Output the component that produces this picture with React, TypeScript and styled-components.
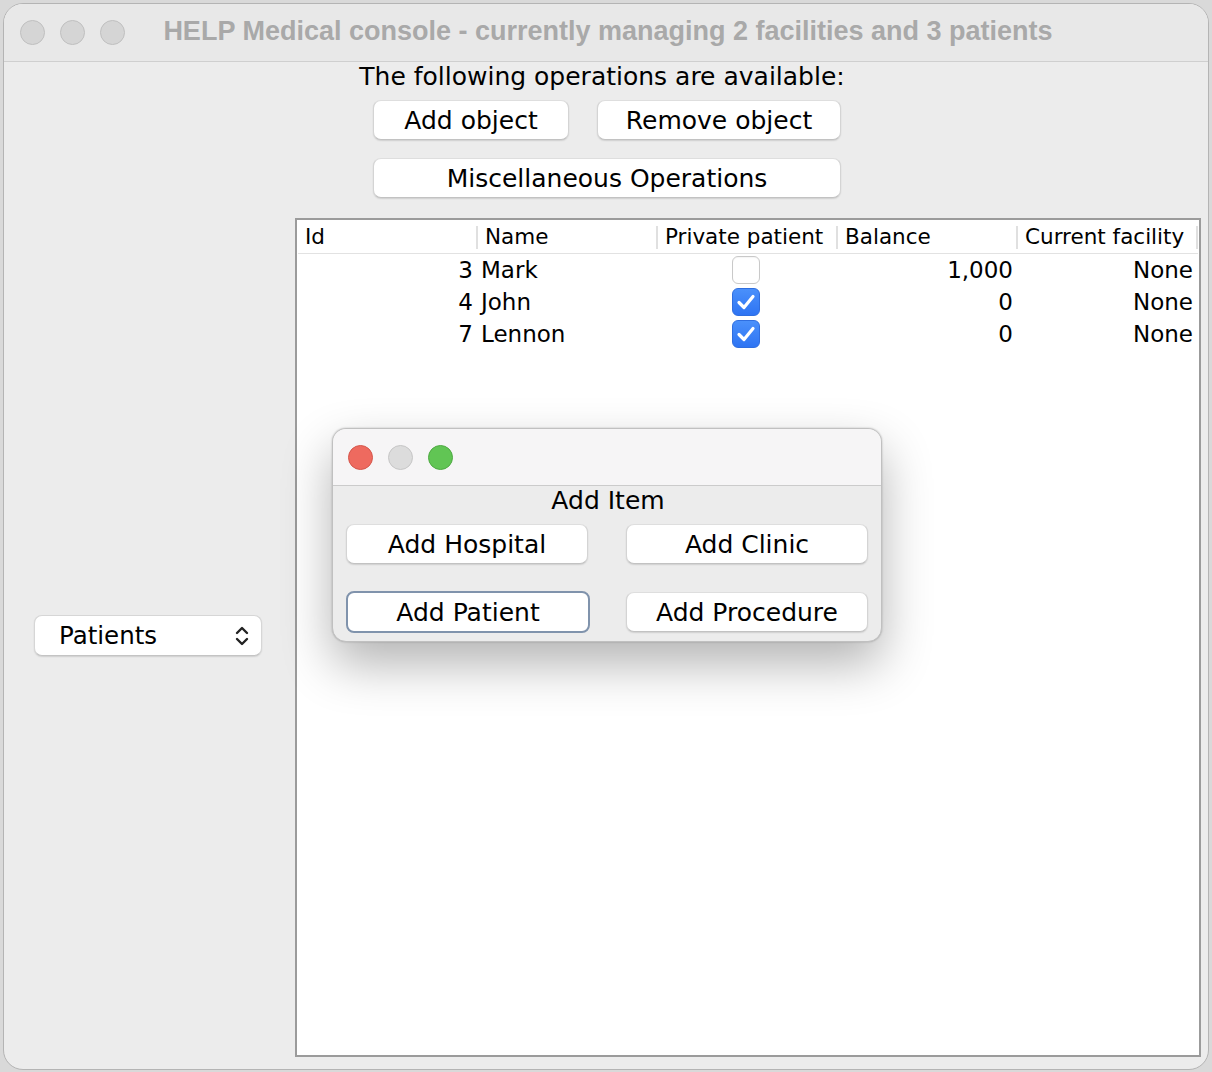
import React from "react";
import styled, { createGlobalStyle, css } from "styled-components";

const Global = createGlobalStyle`
  html, body { margin: 0; padding: 0; background: #d9d9d9; }
  body { width: 1212px; height: 1072px; overflow: hidden; }
  * { box-sizing: border-box; }
`;

const FONT = `"DejaVu Sans", "Noto Sans", sans-serif`;

const Window = styled.div`
  position: relative;
  margin: 3px 0 0 3px;
  width: 1206px;
  height: 1067px;
  border-radius: 20px;
  border: 1px solid #b4b4b4;
  background: #ececec;
  overflow: hidden;
  display: flex;
  flex-direction: column;
  font-family: ${FONT};
  color: #000;
`;

const TitleBar = styled.div`
  height: 58px;
  flex: none;
  display: flex;
  align-items: center;
  padding-left: 16px;
  border-bottom: 1px solid #cfcfcf;
  background: #e8e8e8;
  position: relative;
`;

const Lights = styled.div`
  display: flex;
  gap: 15px;
  align-items: center;
`;

const Light = styled.span<{ $c: string; $b: string }>`
  width: 25px;
  height: 25px;
  border-radius: 50%;
  background: ${(p) => p.$c};
  border: 1px solid ${(p) => p.$b};
  display: block;
`;

const Title = styled.div`
  position: absolute;
  left: 0;
  right: 0;
  top: 0;
  bottom: 0;
  display: flex;
  align-items: center;
  justify-content: center;
  font-family: "Liberation Sans", Arial, sans-serif;
  font-weight: 700;
  font-size: 27px;
  color: #a9a9a9;
  pointer-events: none;
  padding: 0 0 2px 4px;
`;

const Content = styled.div`
  flex: 1;
  display: flex;
  flex-direction: column;
  align-items: center;
  padding: 0 8px 12px 0;
  min-height: 0;
`;

const Label = styled.div`
  font-size: 25px;
  line-height: 30px;
  height: 30px;
`;

const ButtonRow = styled.div`
  display: flex;
  gap: 28px;
  margin-top: 8px;
  padding-left: 10px;
`;

const Button = styled.button<{ $w: number; $focused?: boolean }>`
  width: ${(p) => p.$w}px;
  height: 40px;
  background: #fff;
  border: 1px solid #d4d4d4;
  border-top-color: #dedede;
  border-bottom-color: #c2c2c2;
  border-radius: 8px;
  box-shadow: 0 1px 1.5px rgba(0, 0, 0, 0.12);
  font-family: ${FONT};
  font-size: 25px;
  color: #000;
  padding: 0;
  display: flex;
  align-items: center;
  justify-content: center;
  ${(p) =>
    p.$focused &&
    css`
      border: 2px solid #8093ac;
      box-shadow: none;
      height: 42px;
    `}
`;

const MiscRow = styled.div`
  margin-top: 18px;
  padding-left: 10px;
`;

const Main = styled.div`
  flex: 1;
  align-self: stretch;
  display: flex;
  margin-top: 20px;
  min-height: 0;
`;

const Side = styled.div`
  width: 291px;
  flex: none;
  display: flex;
  align-items: center;
  padding: 0 0 4px 30px;
`;

const Combo = styled.div`
  width: 228px;
  height: 41px;
  background: #fff;
  border: 1px solid #d6d6d6;
  border-bottom-color: #c4c4c4;
  border-radius: 8px;
  box-shadow: 0 1px 1.5px rgba(0, 0, 0, 0.12);
  display: flex;
  align-items: center;
  justify-content: space-between;
  padding: 0 11px 0 24px;
  font-size: 24.5px;
`;

const ScrollPane = styled.div`
  flex: 1;
  border: 2px solid #9b9b9b;
  background: #fff;
  padding: 0 1px;
`;

const Grid = styled.div`
  display: grid;
  grid-template-columns: repeat(5, 180px);
`;

const Header = styled(Grid)`
  height: 34px;
  border-bottom: 1px solid #e2e2e2;
`;

const HeadCell = styled.div`
  font-size: 21.5px;
  display: flex;
  align-items: center;
  padding-left: 7px;
  position: relative;
  white-space: nowrap;
  &::after {
    content: "";
    position: absolute;
    right: 0;
    top: 6px;
    bottom: 4px;
    width: 2px;
    background: #e0e0e0;
  }
`;

const Row = styled(Grid)`
  height: 32px;
`;

const Cell = styled.div<{ $align: "left" | "right" | "center" }>`
  font-size: 23px;
  display: flex;
  align-items: center;
  justify-content: ${(p) =>
    p.$align === "left" ? "flex-start" : p.$align === "right" ? "flex-end" : "center"};
  padding: ${(p) => (p.$align === "left" ? "0 0 0 3px" : p.$align === "right" ? "0 5px 0 0" : "0")};
  white-space: nowrap;
`;

const Check = styled.div<{ $on: boolean }>`
  width: 28px;
  height: 28px;
  border-radius: 6px;
  margin-right: 4px;
  display: flex;
  align-items: center;
  justify-content: center;
  ${(p) =>
    p.$on
      ? css`
          background: linear-gradient(#4a90fb, #2e74f3);
          border: 1px solid #2f6ee0;
        `
      : css`
          background: #fff;
          border: 1px solid #c9c9c9;
          box-shadow: inset 0 1px 1px rgba(0, 0, 0, 0.04);
        `}
`;

const Dialog = styled.div`
  position: absolute;
  left: 328px;
  top: 424px;
  width: 550px;
  height: 214px;
  border-radius: 14px;
  border: 1px solid #c0c0c0;
  background: #ececec;
  box-shadow: 0 22px 50px rgba(0, 0, 0, 0.3), 0 0 2px rgba(0, 0, 0, 0.25);
  overflow: hidden;
  display: flex;
  flex-direction: column;
`;

const DialogBar = styled.div`
  height: 57px;
  flex: none;
  background: #f6f5f6;
  border-bottom: 1px solid #cbcbcb;
  display: flex;
  align-items: center;
  padding-left: 15px;
`;

const DialogTitle = styled.div`
  text-align: center;
  font-size: 25px;
  line-height: 30px;
  height: 30px;
  padding-left: 2px;
`;

const DialogGrid = styled.div`
  margin-top: 8px;
  display: grid;
  grid-template-columns: 242px 242px;
  column-gap: 38px;
  row-gap: 27px;
  padding-left: 13px;
  align-items: center;
`;

const CheckMark = () => (
  <svg width="20" height="18" viewBox="0 0 20 18">
    <path d="M3 9.5 L8 14.5 L17 3.5" fill="none" stroke="#fff" strokeWidth="3.2" strokeLinecap="round" strokeLinejoin="round" />
  </svg>
);

const Arrows = () => (
  <svg width="16" height="24" viewBox="0 0 16 24">
    <path d="M3 9 L8 4 L13 9" fill="none" stroke="#222" strokeWidth="2.4" strokeLinecap="round" strokeLinejoin="round" />
    <path d="M3 15 L8 20 L13 15" fill="none" stroke="#222" strokeWidth="2.4" strokeLinecap="round" strokeLinejoin="round" />
  </svg>
);

const rows = [
  { id: 3, name: "Mark", priv: false, balance: "1,000", facility: "None" },
  { id: 4, name: "John", priv: true, balance: "0", facility: "None" },
  { id: 7, name: "Lennon", priv: true, balance: "0", facility: "None" },
];

export default function App() {
  return (
    <>
      <Global />
      <Window>
        <TitleBar>
          <Lights>
            <Light $c="#d5d5d5" $b="#bfbfbf" />
            <Light $c="#d5d5d5" $b="#bfbfbf" />
            <Light $c="#d5d5d5" $b="#bfbfbf" />
          </Lights>
          <Title>HELP Medical console - currently managing 2 facilities and 3 patients</Title>
        </TitleBar>
        <Content>
          <Label>The following operations are available:</Label>
          <ButtonRow>
            <Button $w={196}>Add object</Button>
            <Button $w={244}>Remove object</Button>
          </ButtonRow>
          <MiscRow>
            <Button $w={468}>Miscellaneous Operations</Button>
          </MiscRow>
          <Main>
            <Side>
              <Combo>
                <span>Patients</span>
                <Arrows />
              </Combo>
            </Side>
            <ScrollPane>
              <Header>
                <HeadCell>Id</HeadCell>
                <HeadCell>Name</HeadCell>
                <HeadCell>Private patient</HeadCell>
                <HeadCell>Balance</HeadCell>
                <HeadCell>Current facility</HeadCell>
              </Header>
              {rows.map((r) => (
                <Row key={r.id}>
                  <Cell $align="right">{r.id}</Cell>
                  <Cell $align="left">{r.name}</Cell>
                  <Cell $align="center">
                    <Check $on={r.priv}>{r.priv && <CheckMark />}</Check>
                  </Cell>
                  <Cell $align="right">{r.balance}</Cell>
                  <Cell $align="right">{r.facility}</Cell>
                </Row>
              ))}
            </ScrollPane>
          </Main>
        </Content>
        <Dialog>
          <DialogBar>
            <Lights>
              <Light $c="#ee6a5f" $b="#d5564b" />
              <Light $c="#dcdcdc" $b="#c6c6c6" />
              <Light $c="#61c554" $b="#4eaa42" />
            </Lights>
          </DialogBar>
          <DialogTitle>Add Item</DialogTitle>
          <DialogGrid>
            <Button $w={242}>Add Hospital</Button>
            <Button $w={242}>Add Clinic</Button>
            <Button $w={244} $focused>Add Patient</Button>
            <Button $w={242}>Add Procedure</Button>
          </DialogGrid>
        </Dialog>
      </Window>
    </>
  );
}
